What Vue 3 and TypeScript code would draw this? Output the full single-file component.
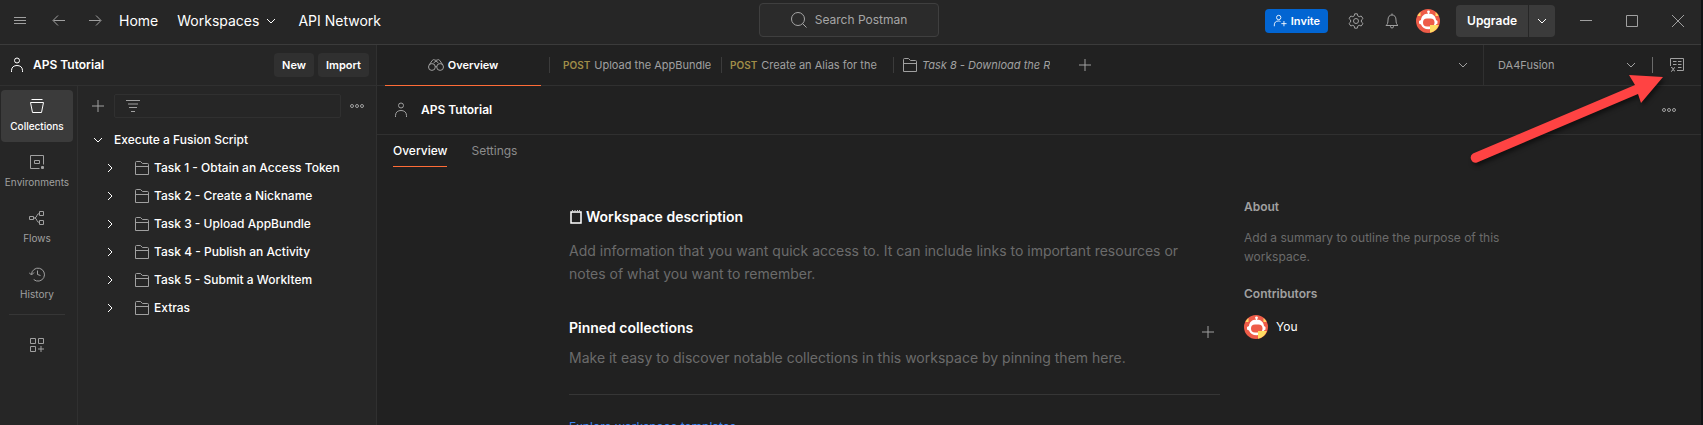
<script setup lang="ts">
import { h, ref } from 'vue'

const shapes: Record<string, string> = {
  menu: 'M2 4.5h12M2 7.5h12M2 10.5h12',
  back: 'M14 7.5H2.5M7 2.5l-5 5 5 5',
  forward: 'M2 7.5h11.5M9 2.5l5 5-5 5',
  down: 'M4 6l4 4 4-4',
  right: 'M6 4l4 4-4 4',
  search: 'M13.5 7a6.5 6.5 0 1 1-13 0 6.5 6.5 0 0 1 13 0zM11.5 11.5l4 4',
  person: 'M10.5 3.5a2.5 2.5 0 1 1-5 0 2.5 2.5 0 0 1 5 0zM2.5 15v-1.5c0-3.5 2.5-5 5.5-5s5.5 1.5 5.5 5V15',
  invite: 'M9 4a2.5 2.5 0 1 1-5 0 2.5 2.5 0 0 1 5 0zM1.5 14v-1.5c0-3 2-4.5 4.5-4.5 1 0 2 .2 2.5.6M12.5 8v6M9.5 11h6',
  gear: 'M6.7.8h2.6l.4 2 1.5.9 2-.7 1.8 2.5-1.6 1.5v2l1.6 1.5-1.8 2.5-2-.7-1.5.9-.4 2H6.7l-.4-2-1.5-.9-2 .7L1 10.5 2.6 9V7L1 5.5 2.8 3l2 .7 1.5-.9zM10.5 8a2.5 2.5 0 1 1-5 0 2.5 2.5 0 0 1 5 0z',
  bell: 'M8 .5v1.5M2 12.5h12c-1.3-1-2-2.5-2-5.5 0-3.3-1.5-5-4-5s-4 1.7-4 5c0 3-.7 4.5-2 5.5zM6.5 13v.5a1.5 1.5 0 0 0 3 0V13',
  minimize: 'M2 7.5h12',
  maximize: 'M2.5 2.5h11v11h-11z',
  close: 'M2 2l12 12M14 2L2 14',
  collections: 'M2.5 1.5h11M1.5 4.5h13l-2 10h-9z',
  environments: 'M14.5 10.5v-9h-13v13h9M5.5 6.5h5v3h-5zM12.5 12.5h2v2h-2zM12.5 13.5h2',
  flows: 'M.5 6.5h4v3h-4zM10.5 1.5h4v4h-4zM10.5 10.5h4v4h-4zM4.5 8h1c3 0 1.5-4.5 5-4.5M5.5 8c3 0 1.5 4.5 5 4.5',
  history: 'M2.5 8.5a6.5 6.5 0 1 1 2.2 5M0 6.5L2.5 9 5 6.5M8.5 4.5v4l3 1',
  blocks: 'M1.5 1.5h5v5h-5zM9.5 1.5h5v5h-5zM1.5 9.5h5v5h-5zM12 9v6M9 12h6',
  plus: 'M8 2v12M2 8h12',
  filter: 'M1 2.5h14M3 6h10M4 9.5h8M6 13.5h4',
  dots: 'M4.5 8a1.5 1.5 0 1 1-3 0 1.5 1.5 0 0 1 3 0zM9.5 8a1.5 1.5 0 1 1-3 0 1.5 1.5 0 0 1 3 0zM14.5 8a1.5 1.5 0 1 1-3 0 1.5 1.5 0 0 1 3 0z',
  folder: 'M1.5 14.5v-12q0-1 1-1h4l2 2h5q1 0 1 1v10zM1.5 6.5h13',
  overview: 'M7.3 10a3.4 3.4 0 1 1-6.8 0 3.4 3.4 0 0 1 6.8 0zM15.5 10a3.4 3.4 0 1 1-6.8 0 3.4 3.4 0 0 1 6.8 0zM1.2 8l3-4.5q1.2-1.5 2.6-.5 1.2.8 2.4 0 1.4-1 2.6.5l3 4.5M7.3 9.5q.7-.6 1.4 0M5.5 6L8 4l2.5 2',
  variables: 'M1.5 9V1.5h13v12H8M4 4.5h3.5M9 4.5h3.5M4 7.5h3.5M9 7.5h3.5M9 10.5h3.5M2 10.5q1.5-.5 2 1.5t2 2M6 10.5q-1 0-2 2t-2 2',
}

const Icon = (props: { name: string }) =>
  h('svg', { class: 'icon', viewBox: '0 0 16 16', 'aria-hidden': 'true' }, [h('path', { d: shapes[props.name] })])
Icon.props = ['name']

const Avatar = () =>
  h('svg', { class: 'avatar', viewBox: '0 0 24 24', 'aria-hidden': 'true' }, [
    h('circle', { cx: 12, cy: 12, r: 12, fill: '#ee5c48' }),
    h('path', { d: 'M2.5 5l2-2v4h-3zM21.5 5l-2-2v4h3z', fill: '#ffd966' }),
    h('circle', { cx: 12.5, cy: 2.8, r: 1.4, fill: '#fff' }),
    h('path', { d: 'M12 3h1v3h-1z', fill: '#fff' }),
    h('path', {
      d: 'M12.5 4.5c4.5 0 7.2 2.9 7.5 6.5l1.5 1v2.5l-1.5 1c-1 3-4 4.8-7.5 4.8S6 18.5 5 15.5l-2-1V12l2-1c.3-3.6 3-6.5 7.5-6.5z',
      fill: '#fff',
    }),
    h('rect', { x: 7, y: 9.5, width: 11.5, height: 8, rx: 4, fill: '#ee5c48' }),
    h('path', { d: 'M14 16h8.8A12 12 0 0 1 14 23.8z', fill: '#ffdc62' }),
  ])

const environment = ref('DA4Fusion')
const filterText = ref('')
const rail = [
  { icon: 'collections', label: 'Collections' },
  { icon: 'environments', label: 'Environments' },
  { icon: 'flows', label: 'Flows' },
  { icon: 'history', label: 'History' },
]
const folders = [
  'Task 1 - Obtain an Access Token',
  'Task 2 - Create a Nickname',
  'Task 3 - Upload AppBundle',
  'Task 4 - Publish an Activity',
  'Task 5 - Submit a WorkItem',
  'Extras',
]
const requests = [
  { method: 'POST', title: 'Upload the AppBundle' },
  { method: 'POST', title: 'Create an Alias for the' },
  { method: '', title: 'Task 8 - Download the R' },
]
</script>

<template>
  <div class="app">
    <header class="topbar">
      <div class="topbar-side">
        <button class="plain menu" aria-label="Menu"><Icon name="menu" /></button>
        <button class="plain" aria-label="Back"><Icon name="back" /></button>
        <button class="plain" aria-label="Forward"><Icon name="forward" /></button>
        <nav class="topnav">
          <a href="#home">Home</a>
          <button class="plain">Workspaces <Icon name="down" /></button>
          <a href="#network">API Network</a>
        </nav>
      </div>
      <button class="search"><Icon name="search" />Search Postman</button>
      <div class="topbar-side actions">
        <button class="invite"><Icon name="invite" />Invite</button>
        <button class="plain" aria-label="Settings"><Icon name="gear" /></button>
        <button class="plain" aria-label="Notifications"><Icon name="bell" /></button>
        <button class="plain account" aria-label="Account"><Avatar /></button>
        <div class="upgrade">
          <button>Upgrade</button>
          <button class="more" aria-label="Upgrade options"><Icon name="down" /></button>
        </div>
        <div class="window">
          <button class="plain" aria-label="Minimize"><Icon name="minimize" /></button>
          <button class="plain" aria-label="Maximize"><Icon name="maximize" /></button>
          <button class="plain" aria-label="Close"><Icon name="close" /></button>
        </div>
      </div>
    </header>

    <div class="body">
      <aside class="sidebar">
        <div class="workspace-bar">
          <Icon name="person" />
          <strong>APS Tutorial</strong>
          <button class="small">New</button>
          <button class="small">Import</button>
        </div>
        <div class="sidebar-body">
          <nav class="rail">
            <button v-for="(item, i) in rail" :key="item.label" class="rail-item" :class="{ active: i === 0 }">
              <Icon :name="item.icon" />{{ item.label }}
            </button>
            <hr />
            <button class="rail-item" aria-label="Configure sidebar"><Icon name="blocks" /></button>
          </nav>
          <section class="explorer">
            <div class="filter-row">
              <button class="plain" aria-label="Create"><Icon name="plus" /></button>
              <label class="filter">
                <Icon name="filter" />
                <input v-model="filterText" type="text" aria-label="Filter collections" />
              </label>
              <button class="plain" aria-label="More"><Icon name="dots" /></button>
            </div>
            <button class="tree-row root"><Icon name="down" />Execute a Fusion Script</button>
            <button v-for="name in folders" :key="name" class="tree-row">
              <Icon name="right" /><Icon name="folder" class="folder" />{{ name }}
            </button>
          </section>
        </div>
      </aside>

      <main class="main">
        <div class="tabs">
          <button class="tab current"><Icon name="overview" />Overview</button>
          <button v-for="(tab, i) in requests" :key="tab.title" class="tab" :class="{ first: i === 0, preview: !tab.method }">
            <span v-if="tab.method" class="method">{{ tab.method }}</span>
            <Icon v-else name="folder" />
            <span class="tab-title">{{ tab.title }}</span>
          </button>
          <button class="plain add-tab" aria-label="New tab"><Icon name="plus" /></button>
          <button class="plain tab-list" aria-label="Tab list"><Icon name="down" /></button>
          <div class="environment">
            <select v-model="environment" aria-label="Environment">
              <option>DA4Fusion</option>
            </select>
            <Icon name="down" />
          </div>
          <button class="plain variables" aria-label="Environment quick look"><Icon name="variables" /></button>
        </div>

        <div class="page-head">
          <Icon name="person" />
          <h1>APS Tutorial</h1>
          <button class="plain" aria-label="Workspace actions"><Icon name="dots" /></button>
        </div>

        <nav class="subtabs">
          <a href="#overview" class="current">Overview</a>
          <a href="#settings">Settings</a>
        </nav>

        <div class="content">
          <section class="primary">
            <h2>
              <svg class="note" viewBox="0 0 12 14" aria-hidden="true">
                <path d="M1 2h10v11H1z" fill="none" stroke="#fff" stroke-width="1.5" />
                <path d="M2.5 0v3M5 0v3M7.5 0v3M9.5 0v3" stroke="#ccc" />
              </svg>
              Workspace description
            </h2>
            <p class="description">
              Add information that you want quick access to. It can include links to important resources or notes of what
              you want to remember.
            </p>
            <div class="pinned">
              <h2>Pinned collections</h2>
              <button class="plain" aria-label="Pin a collection"><Icon name="plus" /></button>
            </div>
            <p class="pinned-hint">Make it easy to discover notable collections in this workspace by pinning them here.</p>
            <hr />
            <a href="#templates" class="templates">Explore workspace templates</a>
          </section>
          <aside class="about">
            <h3>About</h3>
            <p>Add a summary to outline the purpose of this workspace.</p>
            <h3>Contributors</h3>
            <div class="contributor"><Avatar />You</div>
          </aside>
        </div>
      </main>
    </div>

    <svg class="pointer" viewBox="0 0 200 100" aria-hidden="true">
      <path d="M173 3l34 2-22 26-3-9L21 90.5a5 5 0 0 1-4-9L179 13z" />
    </svg>
  </div>
</template>

<style>
html,
body {
  margin: 0;
  background: #212121;
}
</style>

<style scoped>
.app {
  position: relative;
  display: flex;
  flex-direction: column;
  box-sizing: border-box;
  height: 100vh;
  overflow: hidden;
  border-right: 2px solid #111315;
  background: #212121;
  color: #fff;
  font: 400 12px/16px Inter, 'Liberation Sans', sans-serif;
}
.app * {
  box-sizing: border-box;
}
button,
select,
input {
  margin: 0;
  padding: 0;
  border: 0;
  background: none;
  color: inherit;
  font: inherit;
  white-space: nowrap;
}
a {
  color: inherit;
  text-decoration: none;
}
h1,
h2,
h3,
p,
hr {
  margin: 0;
}
hr {
  border: 0;
  border-top: 1px solid #363636;
}
h1,
h3 {
  font-size: 12px;
  font-weight: 600;
}
h2 {
  font-size: 14px;
  line-height: 20px;
  font-weight: 600;
}
.icon {
  flex: none;
  width: 16px;
  height: 16px;
  fill: none;
  stroke: currentColor;
}
.avatar {
  display: block;
  width: 24px;
  height: 24px;
}
.plain {
  display: flex;
  align-items: center;
  color: #a0a0a0;
}

.topbar {
  display: flex;
  align-items: center;
  flex: none;
  height: 45px;
  padding: 0 15px 2px 12px;
  border-bottom: 1px solid #3b3b3b;
  background: #262626;
}
.topbar-side {
  display: flex;
  flex: 1;
  align-items: center;
  gap: 20px;
}
.menu {
  margin-right: 3px;
}
.topnav {
  display: flex;
  align-items: center;
  gap: 19px;
  margin-left: -4px;
  font-size: 14px;
  line-height: 20px;
}
.topnav .plain {
  gap: 4px;
  color: #fff;
}
.search {
  display: flex;
  align-items: center;
  justify-content: center;
  gap: 8px;
  width: 180px;
  height: 34px;
  margin-bottom: 3px;
  border: 1px solid #3f3f3f;
  border-radius: 4px;
  background: #2b2b2b;
  color: #a6a6a6;
}
.actions {
  justify-content: flex-end;
}
.actions .account {
  margin-left: -4px;
}
.invite {
  display: flex;
  align-items: center;
  justify-content: center;
  gap: 4px;
  height: 24px;
  padding: 0 8px;
  border-radius: 4px;
  background: #0265d2;
  font-size: 11px;
  font-weight: 600;
}
.invite .icon {
  width: 14px;
  height: 14px;
}
.upgrade {
  display: flex;
  height: 32px;
  margin-left: -4px;
  border-radius: 4px;
  background: #3b3b3b;
  font-weight: 600;
}
.upgrade button {
  padding: 0 11px;
}
.upgrade .more {
  display: flex;
  align-items: center;
  padding: 0 5px;
  border-left: 1px solid #262626;
}
.window {
  display: flex;
  gap: 30px;
  margin-left: 3px;
}

.body {
  display: flex;
  flex: 1;
  min-height: 0;
}
.sidebar {
  display: flex;
  flex: none;
  flex-direction: column;
  width: 377px;
  border-right: 1px solid #303030;
  background: #262626;
}
.workspace-bar {
  display: flex;
  align-items: center;
  gap: 4px;
  height: 41px;
  padding: 0 7px 0 9px;
  border-bottom: 1px solid #303030;
}
.workspace-bar strong {
  flex: 1;
  margin-left: 4px;
  font-weight: 600;
}
.small {
  height: 24px;
  padding: 0 8px;
  border-radius: 4px;
  background: #303030;
  font-size: 11px;
  font-weight: 600;
}
.sidebar-body {
  display: flex;
  flex: 1;
}
.rail {
  display: flex;
  flex-direction: column;
  gap: 4px;
  width: 78px;
  padding: 4px 4px 0 1px;
  border-right: 1px solid #303030;
  color: #a0a0a0;
}
.rail-item {
  display: flex;
  flex-direction: column;
  align-items: center;
  gap: 4px;
  width: 72px;
  height: 52px;
  padding-top: 8px;
  border-radius: 4px;
  font-size: 10px;
  line-height: 16px;
}
.rail-item.active {
  background: #3b3b3b;
  color: #fff;
  font-weight: 500;
}
.rail hr {
  margin: 0 8px 10px;
}
.explorer {
  flex: 1;
}
.filter-row {
  display: flex;
  align-items: center;
  gap: 8px;
  height: 40px;
  padding: 0 11px 0 12px;
}
.filter {
  display: flex;
  flex: 1;
  align-items: center;
  min-width: 0;
  height: 24px;
  padding-left: 10px;
  border: 1px solid #303030;
  border-radius: 2px;
  color: #a0a0a0;
}
.filter input {
  flex: 1;
  min-width: 0;
  outline: 0;
}
.tree-row {
  display: flex;
  align-items: center;
  width: 100%;
  height: 28px;
  padding-left: 24px;
  font-weight: 500;
}
.tree-row.root {
  gap: 8px;
  padding-left: 12px;
}
.folder {
  margin: 0 4px 0 16px;
  color: #a0a0a0;
}

.main {
  display: flex;
  flex: 1;
  flex-direction: column;
  min-width: 0;
}
.tabs {
  display: flex;
  flex: none;
  align-items: center;
  height: 41px;
  padding-left: 8px;
  border-bottom: 1px solid #303030;
  font-size: 11px;
}
.tab {
  display: flex;
  align-items: center;
  gap: 4px;
  width: 172px;
  height: 16px;
  padding: 0 8px;
  border-left: 1px solid #3b3b3b;
  color: #a0a0a0;
}
.tab.first {
  padding-left: 13px;
}
.tab.current {
  justify-content: center;
  width: 156px;
  height: 41px;
  margin-right: 8px;
  padding: 0;
  border: 0;
  border-bottom: 1px solid #ff6c37;
  color: #fff;
  font-weight: 600;
}
.tab.current .icon {
  color: #a0a0a0;
}
.tab-title {
  overflow: hidden;
}
.method {
  color: #a08d48;
  font-size: 10px;
  font-weight: 600;
}
.preview {
  font-style: italic;
}
.add-tab {
  margin-left: 12px;
}
.tab-list {
  margin: 0 12px 0 auto;
}
.environment {
  display: flex;
  align-items: center;
  align-self: stretch;
  width: 156px;
  padding-left: 14px;
  border-left: 1px solid #303030;
  color: #a0a0a0;
}
.environment select {
  flex: 1;
  appearance: none;
}
.variables {
  height: 16px;
  margin-left: 13px;
  padding: 0 16px;
  border-left: 1px solid #6b6b6b;
}
.page-head {
  display: flex;
  flex: none;
  align-items: center;
  gap: 12px;
  height: 49px;
  padding: 0 24px 0 16px;
  border-bottom: 1px solid #303030;
}
.page-head .icon {
  color: #a0a0a0;
}
.page-head h1 {
  flex: 1;
}
.subtabs {
  display: flex;
  flex: none;
  gap: 24px;
  padding: 8px 16px 0;
  color: #8c8c8c;
}
.subtabs a {
  padding-bottom: 7px;
}
.subtabs .current {
  border-bottom: 1px solid #ff6c37;
  color: #fff;
  font-weight: 500;
}
.content {
  display: grid;
  grid-template-columns: minmax(0, 1fr) 265px;
  gap: 24px;
  width: 100%;
  max-width: 940px;
  margin: 0 auto;
}
.primary {
  padding-top: 40px;
}
.primary h2 {
  display: flex;
  align-items: center;
  gap: 4px;
}
.note {
  width: 12px;
  height: 14px;
  margin-left: 1px;
}
.description,
.pinned-hint {
  color: #6b6b6b;
  font-size: 14px;
}
.description {
  margin-top: 12px;
  padding-right: 32px;
  line-height: 23px;
}
.pinned {
  display: flex;
  align-items: center;
  justify-content: space-between;
  margin-top: 31px;
  padding-right: 4px;
}
.pinned .plain {
  padding-top: 8px;
}
.pinned-hint {
  margin: 8px 0 26px;
  line-height: 20px;
}
.templates {
  display: block;
  margin-top: 24px;
  color: #3b82f0;
}
.about {
  padding-top: 32px;
}
.about h3 {
  color: #a0a0a0;
}
.about p {
  margin: 13px 0 20px;
  color: #6b6b6b;
  line-height: 19px;
}
.contributor {
  display: flex;
  align-items: center;
  gap: 8px;
  margin-top: 13px;
}
.pointer {
  position: absolute;
  top: 72px;
  right: 45px;
  width: 200px;
  height: 100px;
  overflow: visible;
  fill: #ff4343;
  filter: drop-shadow(2px 3px 2px rgba(0, 0, 0, 0.5));
  pointer-events: none;
}
</style>
